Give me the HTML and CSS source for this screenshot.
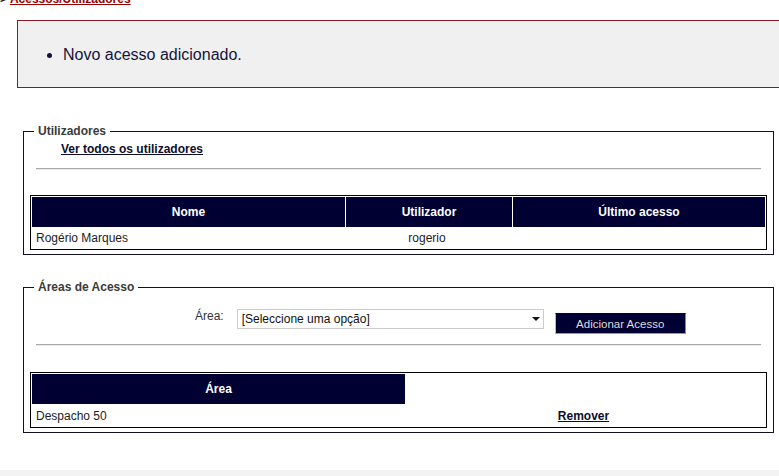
FILE: index.html
```html
<!DOCTYPE html>
<html lang="pt">
<head>
<meta charset="utf-8">
<title>Acessos/Utilizadores</title>
<link rel="stylesheet" href="styles.css">
</head>
<body>
<div class="page">
  <div class="crumb">&gt; <a href="#" class="crumb-link">Acessos/Utilizadores</a></div>

  <div class="msg">
    <ul class="msg-list">
      <li>Novo acesso adicionado.</li>
    </ul>
  </div>

  <fieldset class="box box-users">
    <legend class="box-title">Utilizadores</legend>
    <div class="see-all"><a href="#" class="dark-link">Ver todos os utilizadores</a></div>
    <hr class="sep">
    <table class="grid grid-users">
      <thead>
        <tr>
          <th class="col-nome">Nome</th>
          <th class="col-user">Utilizador</th>
          <th class="col-last">Último acesso</th>
        </tr>
      </thead>
      <tbody>
        <tr class="row-20">
          <td>Rogério Marques</td>
          <td class="center">rogerio</td>
          <td></td>
        </tr>
      </tbody>
    </table>
  </fieldset>

  <fieldset class="box box-areas">
    <legend class="box-title">Áreas de Acesso</legend>
    <div class="area-row">
      <label class="area-label" for="area">Área:</label>
      <div class="select-wrap">
        <select id="area" class="area-select">
          <option>[Seleccione uma opção]</option>
        </select>
      </div>
      <button class="btn" type="button">Adicionar Acesso</button>
    </div>
    <hr class="sep sep-areas">
    <table class="grid">
      <thead>
        <tr>
          <th class="col-area">Área</th>
          <th class="col-empty"></th>
        </tr>
      </thead>
      <tbody>
        <tr class="row-21">
          <td>Despacho 50</td>
          <td class="center"><a href="#" class="dark-link">Remover</a></td>
        </tr>
      </tbody>
    </table>
  </fieldset>

  <div class="bottom-strip"></div>
</div>
</body>
</html>
```

FILE: styles.css
```css
html, body {
  margin: 0;
  padding: 0;
  overflow: hidden;
  background: #ffffff;
}

body {
  font-family: "Liberation Sans", Arial, sans-serif;
  font-size: 12px;
  color: #1c1c1c;
}

.page {
  width: 800px;
}

.crumb {
  margin-top: -8px;
  height: 14px;
  line-height: 14px;
  font-weight: bold;
  color: #222;
}

.crumb-link {
  color: #990000;
  text-decoration: underline;
}

.msg {
  margin: 14px 0 0 17px;
  width: 780px;
  height: 66px;
  border: 1px solid #8a1a2a;
  background: #f0f0f0;
  display: flex;
  align-items: center;
}

.msg-list {
  margin: 2px 0 0 0;
  padding-left: 45px;
  font-size: 16px;
  line-height: 18px;
  color: #14143a;
}

.box {
  margin: 36px 0 0 23px;
  width: 737px;
  padding: 0 6px 4px 6px;
  border: 1px solid #111122;
  min-inline-size: 0;
}

.box-areas {
  margin-top: 25px;
}

.box-title {
  margin-left: 4px;
  padding: 0 4px;
  font-size: 12px;
  line-height: 14px;
  font-weight: bold;
  color: #3a3a3a;
}

.see-all {
  margin-top: 4px;
  padding-left: 31px;
  line-height: 14px;
  font-weight: bold;
}

.dark-link {
  color: #0d0d2b;
  font-weight: bold;
  text-decoration: underline;
}

.sep {
  margin: 12px 6px 0 6px;
  height: 0;
  border: 0;
  border-top: 1px solid #a8a8a8;
  border-bottom: 1px solid #ececec;
}

.sep-areas {
  margin-top: 10px;
}

.grid {
  margin-top: 26px;
  width: 737px;
  border: 1px solid #000000;
  border-collapse: separate;
  border-spacing: 1px;
  table-layout: fixed;
}

.grid-users {
  margin-top: 25px;
}

.grid th {
  height: 30px;
  padding: 0;
  background: #000033;
  color: #ffffff;
  font-size: 12px;
  font-weight: bold;
  text-align: center;
}

.grid th.col-empty {
  background: transparent;
}

.col-nome { width: 313px; }
.col-user { width: 166px; }
.col-last { width: 252px; }
.col-area { width: 373px; }

.grid td {
  padding: 0 0 0 4px;
  font-size: 12px;
  color: #1c1c1c;
  vertical-align: middle;
}

.grid td.center {
  text-align: center;
  padding: 0 4px 0 0;
}

.row-20 td { height: 20px; }
.row-21 td { height: 21px; }

.area-row {
  display: flex;
  align-items: flex-start;
  margin-top: 15px;
  padding-left: 165px;
  height: 25px;
}

.area-label {
  line-height: 14px;
  margin-top: 0;
  color: #333333;
}

.select-wrap {
  position: relative;
  margin-left: 13px;
  width: 307px;
  height: 20px;
}

.area-select {
  appearance: none;
  -webkit-appearance: none;
  width: 307px;
  height: 20px;
  margin: 0;
  padding: 0 0 0 4px;
  border: 1px solid #cccccc;
  background: #ffffff;
  font-family: "Liberation Sans", Arial, sans-serif;
  font-size: 12px;
  color: #111111;
  border-radius: 0;
}

.select-wrap::after {
  content: "";
  position: absolute;
  right: 4px;
  top: 8px;
  border-left: 4px solid transparent;
  border-right: 4px solid transparent;
  border-top: 4px solid #111111;
  pointer-events: none;
}

.btn {
  margin: 4px 0 0 11px;
  width: 131px;
  height: 21px;
  padding: 0;
  background: #000033;
  color: #dddddd;
  font-family: "Liberation Sans", Arial, sans-serif;
  font-size: 11.5px;
  border: 1px solid;
  border-color: #000033 #888888 #999999 #bbbbbb;
  border-radius: 0;
}

.bottom-strip {
  margin-top: 37px;
  height: 10px;
  background: #f3f3f3;
}
```
